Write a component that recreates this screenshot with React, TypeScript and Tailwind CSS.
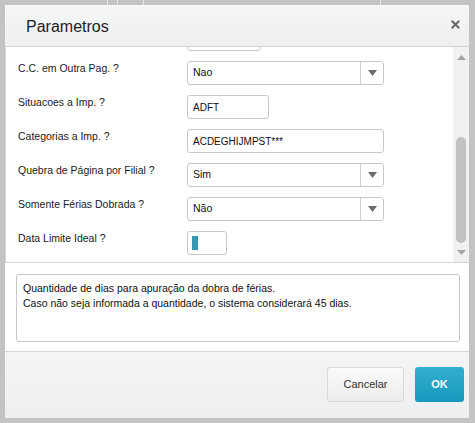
import { X } from "lucide-react";

type Field = {
  label: string;
  kind: "select" | "input" | "date";
  value?: string;
  width?: string;
};

const fields: Field[] = [
  { label: "", kind: "input", value: "", width: "w-[74px]" },
  { label: "C.C. em Outra Pag. ?", kind: "select", value: "Nao" },
  { label: "Situacoes a Imp. ?", kind: "input", value: "ADFT", width: "w-[82px]" },
  { label: "Categorias a Imp. ?", kind: "input", value: "ACDEGHIJMPST***", width: "w-[197px]" },
  { label: "Quebra de Página por Filial ?", kind: "select", value: "Sim" },
  { label: "Somente Férias Dobrada ?", kind: "select", value: "Não" },
  { label: "Data Limite Ideal ?", kind: "date" },
];

function Caret({ up }: { up?: boolean }) {
  return (
    <svg width="9" height="5" viewBox="0 0 9 5">
      <path d={up ? "M0 5 L4.5 0 L9 5 Z" : "M0 0 L9 0 L4.5 5 Z"} fill="#a3a3a3" />
    </svg>
  );
}

function Control({ field }: { field: Field }) {
  if (field.kind === "select") {
    return (
      <div className="flex h-[24px] w-[197px] items-center rounded-[3px] border border-[#c8c8c8] bg-white">
        <span className="flex-1 pl-[5px] text-[10.5px] text-[#111]">{field.value}</span>
        <div className="flex h-full w-[23px] items-center justify-center border-l border-[#d0d0d0]">
          <svg width="9" height="6" viewBox="0 0 9 6">
            <path d="M0 0 L9 0 L4.5 6 Z" fill="#6b6b6b" />
          </svg>
        </div>
      </div>
    );
  }
  if (field.kind === "date") {
    return (
      <div className="flex h-[24px] w-[40px] items-center rounded-[3px] border border-[#c8c8c8] bg-white pl-[4px]">
        <div className="h-[14px] w-[6px] bg-[#3799b1]" />
      </div>
    );
  }
  return (
    <div
      className={`flex h-[24px] items-center rounded-[3px] border border-[#c8c8c8] bg-white pl-[5px] text-[10px] text-[#111] ${field.width}`}
    >
      {field.value}
    </div>
  );
}

export default function App() {
  return (
    <div
      className="flex h-[423px] w-[475px] flex-col bg-[#c3c3c3]"
      style={{ fontFamily: '"Liberation Sans", Arial, sans-serif' }}
    >
      {/* strip of the page behind the modal */}
      <div className="flex h-[5px] shrink-0">
        <div className="w-[108px] border-r border-[#e6e6e6]" />
        <div className="w-[10px] border-r border-[#e6e6e6]" />
        <div className="w-[26px] border-r border-[#e6e6e6]" />
        <div className="w-[237px] border-r border-[#e6e6e6]" />
      </div>

      <div className="ml-[5px] flex h-[413px] w-[464px] flex-col bg-white">
        <header className="flex h-[42px] shrink-0 items-center justify-between border-b border-[#d2d2d2] bg-gradient-to-b from-[#f5f6f6] to-[#eef0f0] pl-[21px] pr-[7px]">
          <h1 className="pt-[2px] text-[16px] text-[#222]">Parametros</h1>
          <X size={13} strokeWidth={3.5} className="mb-[3px] text-[#666]" />
        </header>

        <div className="flex h-[216px] shrink-0 border-b border-l border-[#d4d4d4]">
          <div className="flex-1 overflow-hidden">
            <div className="mt-[-20px] flex flex-col gap-[10px] pl-[12px]">
              {fields.map((f, i) => (
                <div key={i} className="flex items-start">
                  <span className="w-[169px] pt-[1px] text-[10.5px] leading-[13px] text-[#1a1a1a]">
                    {f.label}
                  </span>
                  <Control field={f} />
                </div>
              ))}
            </div>
          </div>
          <div className="flex w-[16px] flex-col items-center bg-[#f1f1f1] pb-[7px] pt-[8px]">
            <Caret up />
            <div className="mt-[77px] h-[106px] w-[10px] rounded-[5px] bg-[#c1c1c1]" />
            <div className="mt-auto">
              <Caret />
            </div>
          </div>
        </div>

        <div className="flex flex-1 flex-col pl-[11px] pt-[11px]">
          <div className="h-[68px] w-[444px] rounded-[3px] border border-[#c8c8c8] px-[6px] pt-[6px] text-[10.5px] leading-[15px] text-[#111]">
            <p>Quantidade de dias para apuração da dobra de férias.</p>
            <p>Caso não seja informada a quantidade, o sistema considerará 45 dias.</p>
          </div>
        </div>

        <footer className="flex h-[67px] shrink-0 items-start justify-end gap-[11px] border-t border-[#d6d6d6] bg-gradient-to-b from-[#f3f4f4] to-[#eeeff1] pr-[5px] pt-[15px]">
          <button className="h-[35px] w-[77px] rounded-[3px] border border-[#d8d8d8] bg-gradient-to-b from-[#fafafa] to-[#ececec] text-[11px] text-[#333]">
            Cancelar
          </button>
          <button className="h-[35px] w-[49px] rounded-[3px] bg-gradient-to-b from-[#31afd2] to-[#1599bc] text-[11px] font-bold text-white">
            OK
          </button>
        </footer>
      </div>
    </div>
  );
}
